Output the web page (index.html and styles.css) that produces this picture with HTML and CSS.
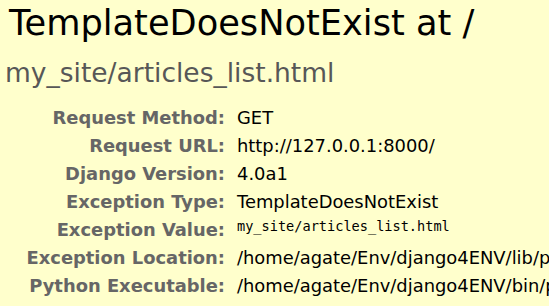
FILE: index.html
```html
<!DOCTYPE html>
<html lang="en">
  <head>
    <meta charset="UTF-8" />
    <title>TemplateDoesNotExist at /</title>
    <link rel="stylesheet" href="styles.css">
  </head>
  <body>
    <div id="summary">
      <h1>TemplateDoesNotExist at /</h1>
      <pre class="exception_value">my_site/articles_list.html</pre>
      <table class="meta">
        <tbody>
          <tr>
            <th>Request Method:</th>
            <td>GET</td>
          </tr>
          <tr>
            <th>Request URL:</th>
            <td>http://127.0.0.1:8000/</td>
          </tr>
          <tr>
            <th>Django Version:</th>
            <td>4.0a1</td>
          </tr>
          <tr>
            <th>Exception Type:</th>
            <td>TemplateDoesNotExist</td>
          </tr>
          <tr>
            <th>Exception Value:</th>
            <td class="mono"><pre>my_site/articles_list.html</pre></td>
          </tr>
          <tr>
            <th>Exception Location:</th>
            <td>/home/agate/Env/django4ENV/lib/python3.8/site-packages/django/template/loader.py, line 19, in get_template</td>
          </tr>
          <tr>
            <th>Python Executable:</th>
            <td>/home/agate/Env/django4ENV/bin/python</td>
          </tr>
        </tbody>
      </table>
    </div>
  </body>
</html>
```

FILE: styles.css
```css
html,
body {
  margin: 0;
  padding: 0;
  background-color: #ffc;
  color: #000;
  font-family: "DejaVu Sans", sans-serif;
  overflow: hidden;
}

#summary {
  padding: 3px 0 0 0;
  white-space: nowrap;
}

h1 {
  margin: 0;
  padding-left: 9px;
  font-weight: normal;
  font-size: 35.2px;
  line-height: 40px;
}

.exception_value {
  margin: 15px 0 16px 5px;
  font-family: "DejaVu Sans", sans-serif;
  font-size: 26.5px;
  line-height: 30px;
  color: #575757;
}

table.meta {
  width: 100%;
  table-layout: fixed;
  border: none;
  border-collapse: collapse;
  background: transparent;
  font-size: 17.9px;
  line-height: 20px;
}

table.meta th {
  width: 225px;
  text-align: right;
  vertical-align: top;
  color: #666;
  padding: 4px 12px 4px 0;
  white-space: nowrap;
}

table.meta td {
  vertical-align: top;
  padding: 4px 0;
  white-space: nowrap;
}

table.meta pre {
  margin: 0;
  font-family: "DejaVu Sans Mono", monospace;
  font-size: 13.6px;
  line-height: 13px;
}
```
